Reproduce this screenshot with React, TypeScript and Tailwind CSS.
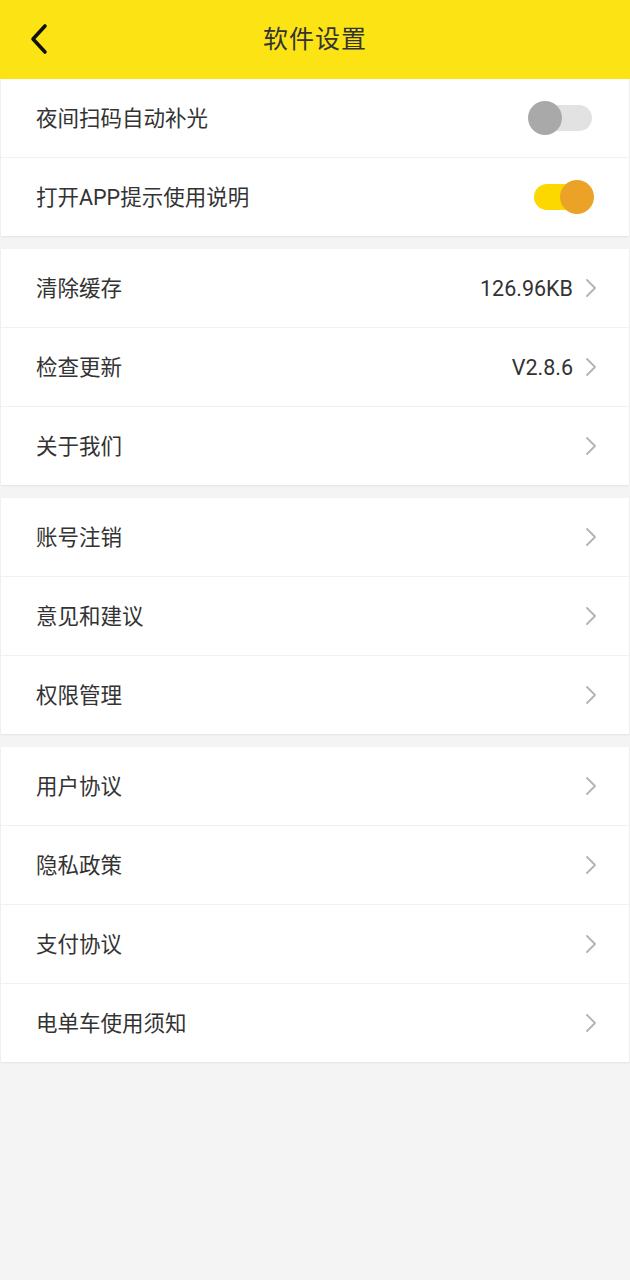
import React, { useState } from "react";

const font = { fontFamily: 'Roboto, "Noto Sans CJK SC", "Noto Sans", sans-serif' };

function Chevron() {
  return (
    <svg width="14" height="20" viewBox="0 0 14 20" className="ml-[11px] shrink-0">
      <path d="M3 2 L11 10 L3 18" fill="none" stroke="#b3b3b3" strokeWidth="1.8" strokeLinecap="round" strokeLinejoin="round" />
    </svg>
  );
}

function Toggle({ on, onClick }: { on: boolean; onClick: () => void }) {
  return (
    <button onClick={onClick} className="relative w-[68px] h-[34px]">
      <span
        className={`absolute top-1/2 -translate-y-1/2 h-[26px] rounded-full ${
          on ? "left-[4px] w-[58px] bg-[#fcd800]" : "left-[2px] w-[60px] bg-[#e2e2e2]"
        }`}
      />
      <span
        className={`absolute top-1/2 -translate-y-1/2 w-[34px] h-[34px] rounded-full ${
          on ? "left-[30px] bg-[#eca226]" : "left-[-2px] bg-[#a9a9a9]"
        }`}
      />
    </button>
  );
}

function Row({ label, value, last, right }: { label: string; value?: string; last?: boolean; right?: React.ReactNode }) {
  return (
    <div className={`flex items-center pl-[35px] pr-[31px] ${last ? "h-[78px]" : "h-[79px] border-b border-[#f1f1f1]"}`}>
      <span className="flex-1 text-[21.5px] text-[#333333] pt-[2px]">{label}</span>
      {right ?? (
        <>
          {value && <span className="text-[21.5px] text-[#333333] pt-[2px]">{value}</span>}
          <Chevron />
        </>
      )}
    </div>
  );
}

function Group({ children }: { children: React.ReactNode }) {
  return <div className="bg-white mx-[1px] shadow-[0_1px_2px_rgba(0,0,0,0.07)]">{children}</div>;
}

export default function App() {
  const [light, setLight] = useState(false);
  const [tips, setTips] = useState(true);

  return (
    <div className="w-[630px] min-h-[1280px] bg-[#f4f4f4]" style={font}>
      <header className="h-[79px] bg-[#fce414] flex items-center justify-center relative">
        <button className="absolute left-[28px] top-[22px] w-[24px] h-[34px] flex items-center">
          <svg width="22" height="32" viewBox="0 0 22 32">
            <path d="M17 3 L5 16 L17 29" fill="none" stroke="#111" strokeWidth="3.6" strokeLinecap="round" strokeLinejoin="round" />
          </svg>
        </button>
        <h1 className="text-[25px] text-[#333333] tracking-[1px]">软件设置</h1>
      </header>

      <div className="flex flex-col gap-[13px]">
        <Group>
          <Row label="夜间扫码自动补光" right={<Toggle on={light} onClick={() => setLight(!light)} />} />
          <Row label="打开APP提示使用说明" last right={<Toggle on={tips} onClick={() => setTips(!tips)} />} />
        </Group>
        <Group>
          <Row label="清除缓存" value="126.96KB" />
          <Row label="检查更新" value="V2.8.6" />
          <Row label="关于我们" last />
        </Group>
        <Group>
          <Row label="账号注销" />
          <Row label="意见和建议" />
          <Row label="权限管理" last />
        </Group>
        <Group>
          <Row label="用户协议" />
          <Row label="隐私政策" />
          <Row label="支付协议" />
          <Row label="电单车使用须知" last />
        </Group>
      </div>
    </div>
  );
}
